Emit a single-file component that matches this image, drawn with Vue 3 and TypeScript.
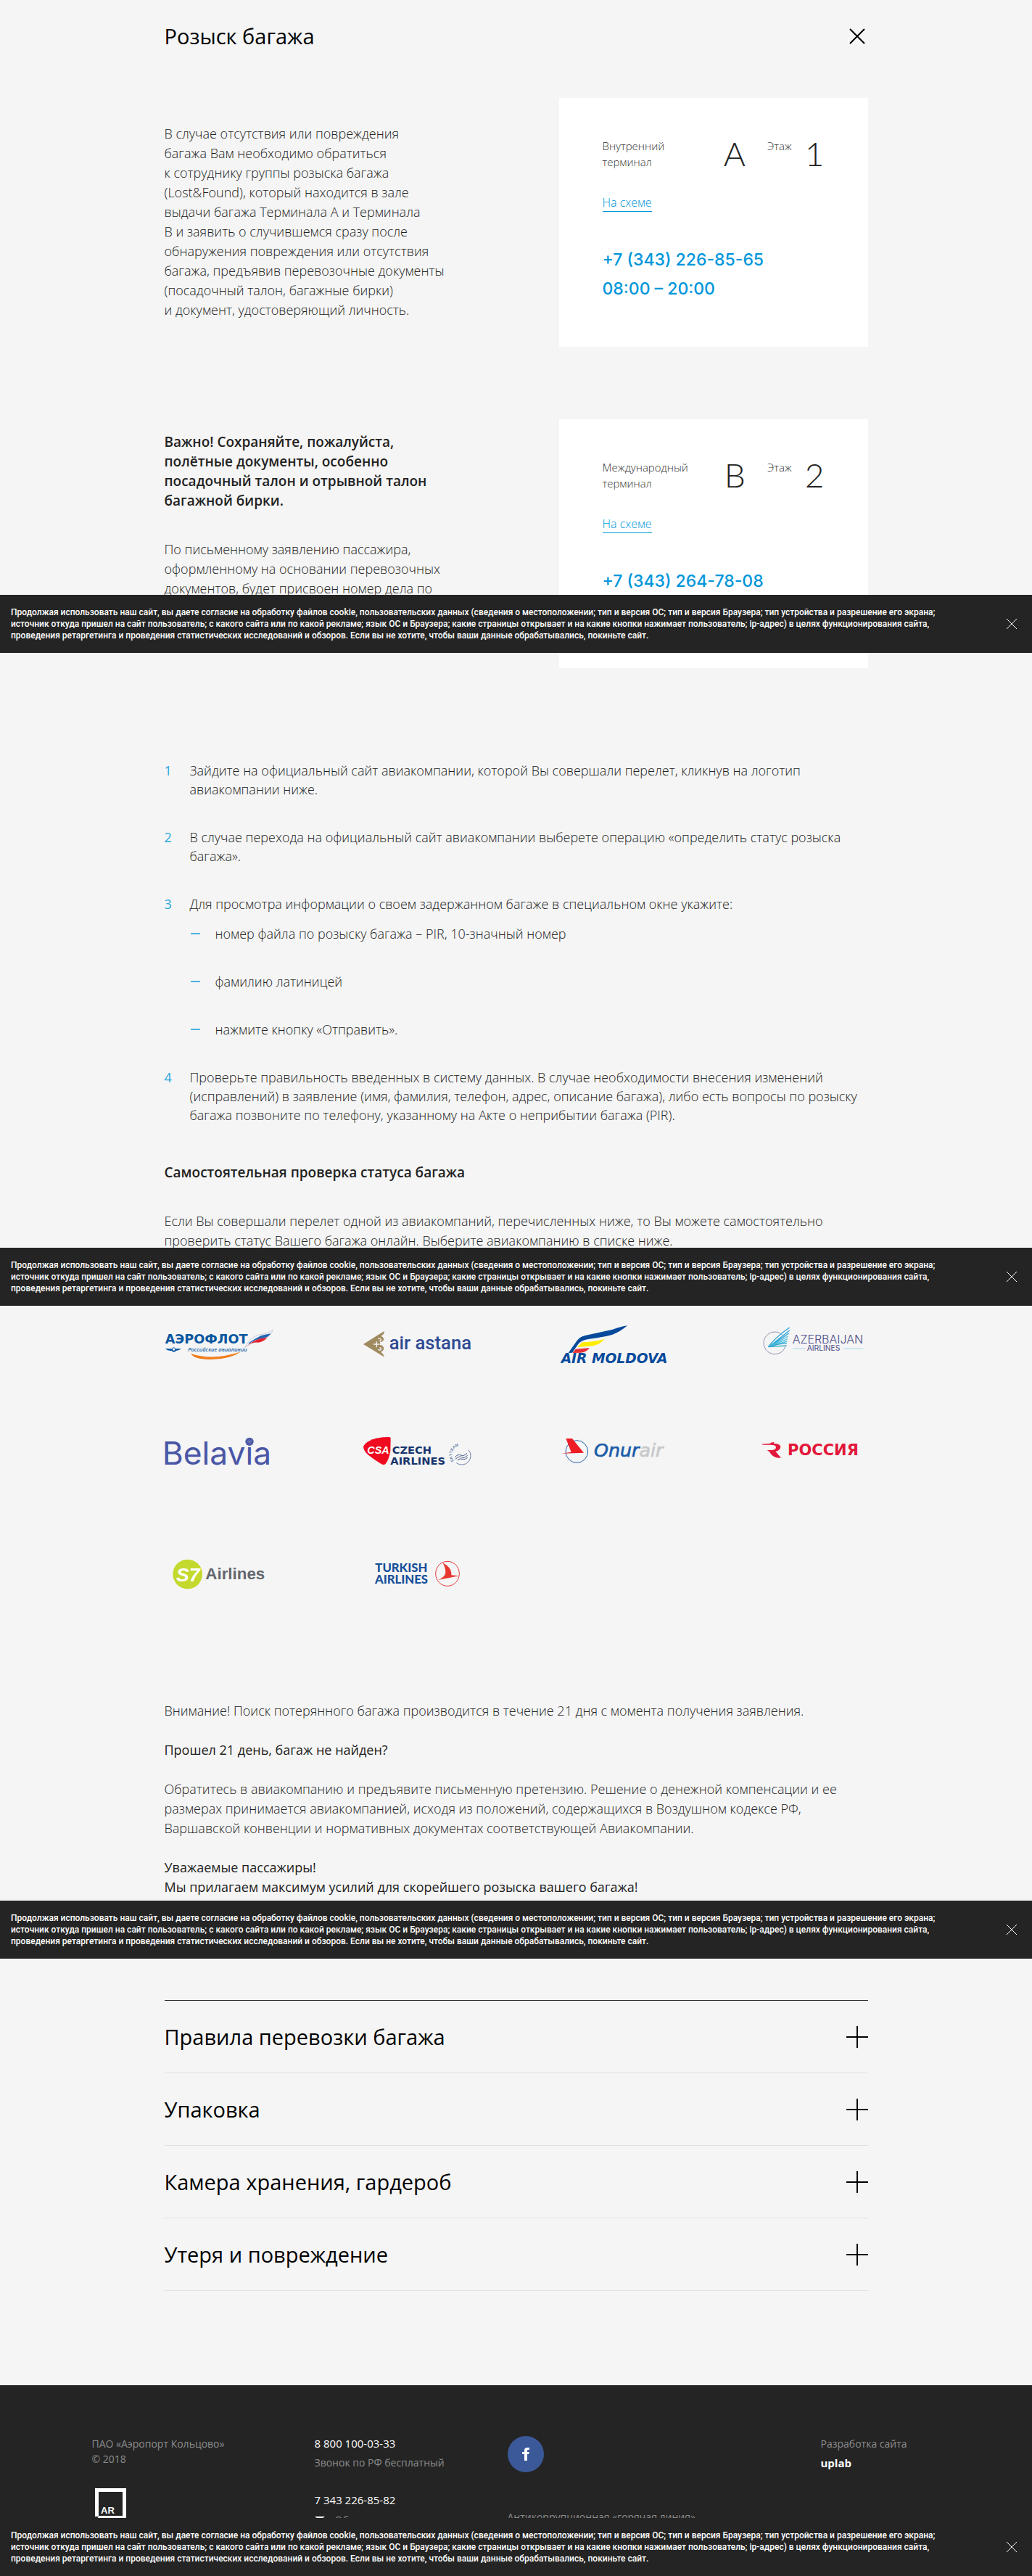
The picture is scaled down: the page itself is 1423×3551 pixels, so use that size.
<script setup lang="ts">
interface Terminal {
  name: string
  letter: string
  floor: number
  phone: string
  hours: string
}

const terminals: Terminal[] = [
  { name: 'Внутренний\nтерминал', letter: 'A', floor: 1, phone: '+7 (343) 226-85-65', hours: '08:00 – 20:00' },
  { name: 'Международный\nтерминал', letter: 'B', floor: 2, phone: '+7 (343) 264-78-08', hours: '' },
]

const introText = `В случае отсутствия или повреждения
багажа Вам необходимо обратиться
к сотруднику группы розыска багажа
(Lost&Found), который находится в зале
выдачи багажа Терминала А и Терминала
В и заявить о случившемся сразу после
обнаружения повреждения или отсутствия
багажа, предъявив перевозочные документы
(посадочный талон, багажные бирки)
и документ, удостоверяющий личность.`

const keepText = `Важно! Сохраняйте, пожалуйста,
полётные документы, особенно
посадочный талон и отрывной талон
багажной бирки.`

const claimText = `По письменному заявлению пассажира,
оформленному на основании перевозочных
документов, будет присвоен номер дела по`

interface Step {
  text: string
  sub?: string[]
}

const steps: Step[] = [
  { text: 'Зайдите на официальный сайт авиакомпании, которой Вы совершали перелет, кликнув на логотип\nавиакомпании ниже.' },
  { text: 'В случае перехода на официальный сайт авиакомпании выберете операцию «определить статус розыска\nбагажа».' },
  {
    text: 'Для просмотра информации о своем задержанном багаже в специальном окне укажите:',
    sub: ['номер файла по розыску багажа – PIR, 10-значный номер', 'фамилию латиницей', 'нажмите кнопку «Отправить».'],
  },
  {
    text: 'Проверьте правильность введенных в систему данных. В случае необходимости внесения изменений\n(исправлений) в заявление (имя, фамилия, телефон, адрес, описание багажа), либо есть вопросы по розыску\nбагажа позвоните по телефону, указанному на Акте о неприбытии багажа (PIR).',
  },
]

const sections = ['Правила перевозки багажа', 'Упаковка', 'Камера хранения, гардероб', 'Утеря и повреждение']

const notices = ['first', 'second', 'third', 'last']
const noticeText = `Продолжая использовать наш сайт, вы даете согласие на обработку файлов cookie, пользовательских данных (сведения о местоположении; тип и версия ОС; тип и версия Браузера; тип устройства и разрешение его экрана;
источник откуда пришел на сайт пользователь; с какого сайта или по какой рекламе; язык ОС и Браузера; какие страницы открывает и на какие кнопки нажимает пользователь; ip-адрес) в целях функционирования сайта,
проведения ретаргетинга и проведения статистических исследований и обзоров. Если вы не хотите, чтобы ваши данные обрабатывались, покиньте сайт.`
</script>

<template>
  <div class="page">
    <main class="container">
      <header class="head">
        <h1>Розыск багажа</h1>
        <button type="button" class="close" aria-label="Закрыть">
          <svg width="22" height="22" viewBox="0 0 22 22"><path d="M1 1 L21 21 M21 1 L1 21" stroke="#000" stroke-width="2" fill="none" /></svg>
        </button>
      </header>

      <section v-for="(t, i) in terminals" :key="t.letter" class="block">
        <div class="block-text" :class="{ important: i === 1 }">
          <template v-if="i === 0">
            <p>{{ introText }}</p>
          </template>
          <template v-else>
            <h3>{{ keepText }}</h3>
            <p>{{ claimText }}</p>
          </template>
        </div>
        <div class="card">
          <div class="where">
            <span class="label terminal">{{ t.name }}</span>
            <span class="big">{{ t.letter }}</span>
            <span class="label">Этаж</span>
            <span class="big">{{ t.floor }}</span>
          </div>
          <a href="#" class="scheme">На схеме</a>
          <div class="contact">
            <a href="#">{{ t.phone }}</a>
            <span v-if="t.hours">{{ t.hours }}</span>
          </div>
        </div>
      </section>

      <ol class="steps">
        <li v-for="(s, i) in steps" :key="i">
          <span class="num">{{ i + 1 }}</span>
          <div>
            <p>{{ s.text }}</p>
            <ul v-if="s.sub">
              <li v-for="u in s.sub" :key="u"><span class="dash"></span>{{ u }}</li>
            </ul>
          </div>
        </li>
      </ol>

      <h3 class="check">Самостоятельная проверка статуса багажа</h3>
      <p>Если Вы совершали перелет одной из авиакомпаний, перечисленных ниже, то Вы можете самостоятельно<br />проверить статус Вашего багажа онлайн. Выберите авиакомпанию в списке ниже.</p>

      <div class="logos">
        <a href="#" aria-label="Аэрофлот">
          <svg viewBox="50 72 450 180">
            <text x="52" y="156" font-family="DejaVu Sans" font-weight="700" font-size="53" fill="#0a57a0">АЭРОФЛОТ</text>
            <text x="147" y="188" font-family="Noto Sans" font-style="italic" font-weight="500" font-size="23" fill="#0a57a0">Российские авиалинии</text>
            <path d="M53 177 L80 178 Q88 166 96 178 L118 177 Q110 186 98 186 Q88 196 78 186 Q62 187 53 177Z" fill="#0a57a0" />
            <circle cx="88" cy="180" r="5" fill="#f5f5f5" />
            <path d="M159 198 Q250 228 366 190 Q320 222 245 222 Q170 222 159 198Z" fill="#f07f1e" />
            <path d="M382 172 Q405 128 440 120 Q480 115 498 99 Q490 128 455 142 Q420 146 382 172Z" fill="#f1f3fa" stroke="#7d86a8" stroke-width="1" />
            <path d="M400 152 Q425 136 448 124 Q470 118 489 115 Q478 132 452 136 Q425 138 396 160Z" fill="#2464b4" />
            <path d="M388 168 Q420 142 445 136 Q468 134 476 128 Q462 150 435 152 Q412 150 388 168Z" fill="#e2232e" />
          </svg>
        </a>
        <a href="#" aria-label="Air Astana">
          <svg viewBox="870 72 450 180">
            <path d="M873 159 L959 105 L959 113 Q954 122 946 125 Q960 132 957 142 Q952 152 941 148 Q944 156 941 162 Q953 162 957 173 Q959 187 944 191 Q955 196 960 212 Z" fill="#a08a60" />
            <path d="M915 159 H940 M928 148 V172 M934 138 Q941 132 946 139 Q946 145 940 145 M934 181 Q941 187 946 180 Q946 173 940 173" fill="none" stroke="#f5f5f5" stroke-width="4" />
            <text x="980" y="181" font-family="Roboto" font-weight="500" font-size="77" fill="#2f4a94">air astana</text>
          </svg>
        </a>
        <a href="#" aria-label="Air Moldova">
          <svg viewBox="190 72 450 180">
            <path d="M222 195 L258 144 Q270 127 292 123 L405 98 Q440 86 466 82 Q436 108 405 119 Q385 126 305 138 Q275 142 262 160 L238 194Z" fill="#064a9b" />
            <path d="M260 171 L279 151 Q340 148 372 137 Q350 164 310 167Z" fill="#ffec00" />
            <path d="M239 195 L252 179 L310 174 Q295 193 275 194Z" fill="#e63338" />
            <text x="192" y="238" font-family="DejaVu Sans" font-style="italic" font-weight="700" font-size="56" fill="#064a9b">AIR MOLDOVA</text>
          </svg>
        </a>
        <a href="#" aria-label="Azerbaijan Airlines">
          <svg viewBox="1010 72 450 180">
            <path d="M1112 124 A46 46 0 1 0 1121 168" fill="none" stroke="#5d5f92" stroke-width="2" />
            <path d="M1050 170 Q1080 130 1138 90 M1060 164 L1138 102 M1064 163 L1135 114" stroke="#2ba3d6" stroke-width="4" fill="none" />
            <path d="M1064 164 L1132 126 M1062 166 L1130 137 M1060 168 L1128 147" stroke="#4fbfe0" stroke-width="4" />
            <path d="M1050 170 Q1085 158 1127 155 M1052 170 L1126 165" stroke="#38aacb" stroke-width="4" fill="none" />
            <text x="1150" y="156" font-family="Inter" font-weight="300" font-size="48" fill="#4a4c88">AZERBAIJAN</text>
            <text x="1210" y="187" font-family="Inter" font-weight="400" font-size="31" fill="#4a4c88">AIRLINES</text>
            <path d="M1152 177 H1203 M1363 177 H1443" stroke="#a9d5ee" stroke-width="3" />
          </svg>
        </a>
        <a href="#" aria-label="Belavia">
          <svg viewBox="50 510 450 180">
            <text x="40" y="656" font-family="Inter" font-weight="400" font-size="133" fill="#4a57a6">Belavia</text>
            <circle cx="401" cy="562" r="17" fill="#4a57a6" />
            <path d="M401 549 V575 M388 562 H414 M392 553 L410 571 M410 553 L392 571" stroke="#a4abd2" stroke-width="1" />
          </svg>
        </a>
        <a href="#" aria-label="Czech Airlines">
          <svg viewBox="870 510 450 180">
            <path d="M873 582 Q895 543 980 543 Q986 543 986 550 L985 600 Q978 640 964 655 Q958 660 948 655 Q915 635 888 612 Q874 598 873 582Z" fill="#ef0a20" />
            <text x="889" y="611" font-family="Liberation Sans" font-style="italic" font-weight="700" font-size="43" fill="#fff">CSA</text>
            <text x="992" y="613" font-family="DejaVu Sans" font-weight="700" font-size="44" fill="#17346c">CZECH</text>
            <text x="985" y="656" font-family="DejaVu Sans" font-weight="700" font-size="44" fill="#17346c">AIRLINES</text>
            <path d="M1308 596 A37 37 0 0 1 1258 650" fill="none" stroke="#6a7fa8" stroke-width="3" />
            <path d="M1252 626 Q1265 612 1276 618 T1302 610 M1254 634 Q1270 620 1280 626 T1304 619 M1262 638 Q1274 630 1284 634 T1304 628" fill="none" stroke="#3f5788" stroke-width="3" />
            <path id="skyteam" d="M1248 642 A38 38 0 0 1 1310 592" fill="none" />
            <text font-family="Liberation Sans" font-weight="700" font-size="16" fill="#6a7fa8"><textPath href="#skyteam">SKYTEAM</textPath></text>
          </svg>
        </a>
        <a href="#" aria-label="Onur Air">
          <svg viewBox="190 510 450 180">
            <circle cx="257" cy="603" r="46" fill="none" stroke="#1f5fa9" stroke-width="3" />
            <path d="M212 549 H238 L286 608 L193 611 L234 605Z" fill="#ee1c25" />
            <text x="328" y="624" font-family="DejaVu Sans" font-style="italic" font-weight="400" font-size="76" fill="#1a5ba8" stroke="#1a5ba8" stroke-width="2">Onur<tspan fill="#c6c8ca" stroke="#c6c8ca">air</tspan></text>
          </svg>
        </a>
        <a href="#" aria-label="Россия">
          <svg viewBox="1010 510 450 180">
            <path d="M1022 572 Q1045 570 1056 570 Q1064 563 1074 564 L1072 569 Q1101 570 1101 584 Q1099 598 1080 602 L1103 629 Q1078 632 1062 614 Q1056 602 1045 597 H1066 Q1082 595 1082 584 Q1081 575 1060 575 H1028Z" fill="#e2183a" />
            <text x="1130" y="619" font-family="DejaVu Sans" font-weight="700" font-size="63" fill="#e2183a">РОССИЯ</text>
          </svg>
        </a>
        <a href="#" aria-label="S7 Airlines">
          <svg viewBox="50 1017 450 180">
            <circle cx="145" cy="1107" r="61" fill="#c4d92d" />
            <text x="98" y="1137" font-family="Liberation Sans" font-style="italic" font-weight="700" font-size="80" fill="#fff">S7</text>
            <text x="219" y="1129" font-family="Liberation Sans" font-weight="700" font-size="67" fill="#63666d">Airlines</text>
          </svg>
        </a>
        <a href="#" aria-label="Turkish Airlines">
          <svg viewBox="870 1017 450 180">
            <text x="922" y="1098" font-family="Lato" font-weight="900" font-size="50" fill="#17509a">TURKISH</text>
            <text x="921" y="1145" font-family="Lato" font-weight="900" font-size="50" fill="#17509a">AIRLINES</text>
            <ellipse cx="1221" cy="1105" rx="49" ry="51" fill="none" stroke="#e8373a" stroke-width="3" />
            <path d="M1201 1060 Q1240 1080 1237 1111 L1269 1114 L1182 1131 Q1212 1118 1213 1100 Q1213 1080 1201 1060Z" fill="#e8372f" />
          </svg>
        </a>
      </div>

      <div class="outro">
        <p>Внимание! Поиск потерянного багажа производится в течение 21 дня с момента получения заявления.</p>
        <p class="strong">Прошел 21 день, багаж не найден?</p>
        <p>Обратитесь в авиакомпанию и предъявите письменную претензию. Решение о денежной компенсации и ее<br />размерах принимается авиакомпанией, исходя из положений, содержащихся в Воздушном кодексе РФ,<br />Варшавской конвенции и нормативных документах соответствующей Авиакомпании.</p>
        <p class="strong">Уважаемые пассажиры!<br />Мы прилагаем максимум усилий для скорейшего розыска вашего багажа!</p>
      </div>

      <div class="accordion">
        <button v-for="s in sections" :key="s" type="button">
          <span>{{ s }}</span>
          <svg width="30" height="30" viewBox="0 0 30 30" shape-rendering="crispEdges"><path d="M0 14 H30 V16 H0Z M14 0 H16 V30 H14Z" fill="#000" /></svg>
        </button>
      </div>
    </main>

    <footer>
      <div class="foot">
        <div>
          <p>ПАО «Аэропорт Кольцово»<br />© 2018</p>
          <svg class="ar" width="48" height="52" viewBox="0 0 48 52">
            <path d="M3 0 H46 V45 H4 L8 39 H3Z M8 5 V38 H41 V5Z" fill="#fff" fill-rule="evenodd" />
            <text x="11" y="35" font-family="Liberation Sans" font-weight="700" font-size="13" fill="#fff">AR</text>
          </svg>
        </div>
        <div>
          <a href="#" class="tel">8 800 100-03-33</a>
          <p class="free">Звонок по РФ бесплатный</p>
          <a href="#" class="tel">7 343 226-85-82</a>
          <a href="#" class="feedback">
            <svg width="14" height="10" viewBox="0 0 14 10"><path d="M0 0 H14 L7 5Z M0 2 L7 7 L14 2 V10 H0Z" fill="#fff" /></svg>
            <span>Обратная связь</span>
          </a>
        </div>
        <div>
          <a href="#" class="fb" aria-label="Facebook">
            <svg width="50" height="50" viewBox="0 0 50 50">
              <circle cx="25" cy="25" r="25" fill="#3b5998" />
              <path d="M23 34 V25 H20 V22 H23 V20 Q23 16 27 16 H30 V19 H28 Q27 19 27 20 V22 H30 L29 25 H27 V34Z" fill="#fff" />
            </svg>
          </a>
          <p class="hotline">Антикоррупционная «горячая линия»</p>
        </div>
        <div>
          <p>Разработка сайта</p>
          <a href="#" class="uplab">uplab</a>
        </div>
      </div>
    </footer>

    <aside v-for="n in notices" :key="n" class="notice" :class="n">
      <p>{{ noticeText }}</p>
      <button type="button" aria-label="Закрыть">
        <svg width="16" height="16" viewBox="0 0 16 16"><path d="M1 1 L15 15 M15 1 L1 15" stroke="#fff" stroke-width="1" fill="none" /></svg>
      </button>
    </aside>
  </div>
</template>

<style>
body {
  margin: 0;
  background: #f5f5f5;
}
</style>

<style scoped>
.page {
  position: relative;
  background: #f5f5f5;
  color: #222;
  font-family: 'Open Sans', 'Noto Sans', sans-serif;
  font-size: 18px;
  font-weight: 300;
  line-height: 27px;
}
.page * {
  box-sizing: border-box;
}
h1,
h3,
p,
ol,
ul {
  margin: 0;
  padding: 0;
  list-style: none;
}
p,
h3 {
  white-space: pre-line;
}
a {
  text-decoration: none;
}
button {
  padding: 0;
  border: 0;
  background: none;
  color: inherit;
  font-family: inherit;
  cursor: pointer;
}
svg {
  display: block;
}
.container {
  max-width: 970px;
  margin: 0 auto;
}
.head {
  display: flex;
  align-items: center;
  justify-content: space-between;
  height: 100px;
  padding-right: 4px;
}
h1 {
  color: #000;
  font-size: 29px;
  font-weight: 400;
  line-height: 40px;
}
.block {
  display: grid;
  grid-template-columns: 1fr 426px;
  margin-top: 35px;
}
.block + .block {
  margin-top: 100px;
}
.block-text {
  padding-top: 36px;
}
.block-text.important {
  padding-top: 18px;
}
h3 {
  font-size: 19px;
  font-weight: 600;
}
.block-text h3 {
  margin-bottom: 40px;
}
.card {
  height: 343px;
  padding: 54px 60px;
  background: #fff;
}
.where {
  display: flex;
  height: 76px;
}
.label {
  padding-top: 1px;
  color: #333;
  font-size: 15px;
  line-height: 22px;
  white-space: pre-line;
}
.terminal {
  flex: 1;
}
.big {
  padding-left: 18px;
  font-family: Lato, sans-serif;
  font-size: 46px;
  line-height: 46px;
}
.big + .label {
  padding-left: 30px;
}
.scheme {
  display: inline-block;
  border-bottom: 1px solid #0096db;
  color: #0096db;
  font-size: 16px;
  line-height: 24px;
}
.contact {
  display: flex;
  flex-direction: column;
  margin-top: 46px;
  font-family: Inter, sans-serif;
  font-size: 23px;
  font-weight: 500;
  line-height: 40px;
}
.contact,
.contact a {
  color: #0096db;
}
.steps {
  margin-top: 128px;
  line-height: 26px;
}
.steps > li {
  display: flex;
}
.steps > li + li {
  margin-top: 40px;
}
.num {
  flex: 0 0 35px;
  color: #2ba6e0;
  font-weight: 400;
}
.steps p {
  white-space: pre;
}
.steps ul {
  display: flex;
  flex-direction: column;
  gap: 40px;
  margin-top: 15px;
}
.steps ul li {
  display: flex;
  align-items: center;
}
.dash {
  width: 13px;
  height: 2px;
  margin: 0 21px 0 1px;
  background: #4ab2e2;
}
.check {
  margin: 52px 0 40px;
  line-height: 28px;
}
.logos {
  display: grid;
  grid-template-columns: repeat(4, 150px);
  grid-template-rows: 60px 60px 84px;
  row-gap: 86px;
  justify-content: space-between;
  align-items: end;
  margin: 100px 0 145px;
}
.logos svg {
  width: 150px;
  height: 60px;
}
.outro {
  display: flex;
  flex-direction: column;
  gap: 27px;
}
.strong {
  font-weight: 400;
}
.accordion {
  margin-top: 142px;
  border-top: 1px solid #242424;
}
.accordion button {
  display: flex;
  align-items: center;
  justify-content: space-between;
  width: 100%;
  height: 100px;
  border-bottom: 1px solid #e0e0e0;
  color: #000;
  font-size: 29px;
  text-align: left;
}
footer {
  height: 263px;
  margin-top: 130px;
  background: #242424;
  color: #8c8c8c;
  font-size: 14px;
  font-weight: 400;
  line-height: 21px;
}
.foot {
  display: grid;
  grid-template-columns: 307px 266px 432px 1fr;
  max-width: 1170px;
  margin: 0 auto;
  padding-top: 70px;
}
.ar {
  margin: 30px 0 0 1px;
}
.tel {
  display: block;
  color: #fff;
  font-size: 15px;
}
.free {
  margin: 5px 0 31px;
}
.feedback {
  display: flex;
  align-items: center;
  gap: 14px;
  margin-top: 6px;
  color: #8c8c8c;
}
.hotline {
  margin-top: 51px;
}
.uplab {
  display: block;
  margin-top: 6px;
  color: #fff;
  font-size: 15px;
  font-weight: 700;
}
.notice {
  position: absolute;
  left: 0;
  right: 0;
  display: flex;
  align-items: center;
  justify-content: space-between;
  height: 80px;
  padding: 0 20px 0 15px;
  background: #242424;
  color: #fff;
  font-family: Roboto, sans-serif;
  font-size: 12px;
  font-weight: 500;
  line-height: 16px;
}
.first {
  top: 820px;
}
.second {
  top: 1720px;
}
.third {
  top: 2620px;
}
.last {
  bottom: 0;
}
</style>
